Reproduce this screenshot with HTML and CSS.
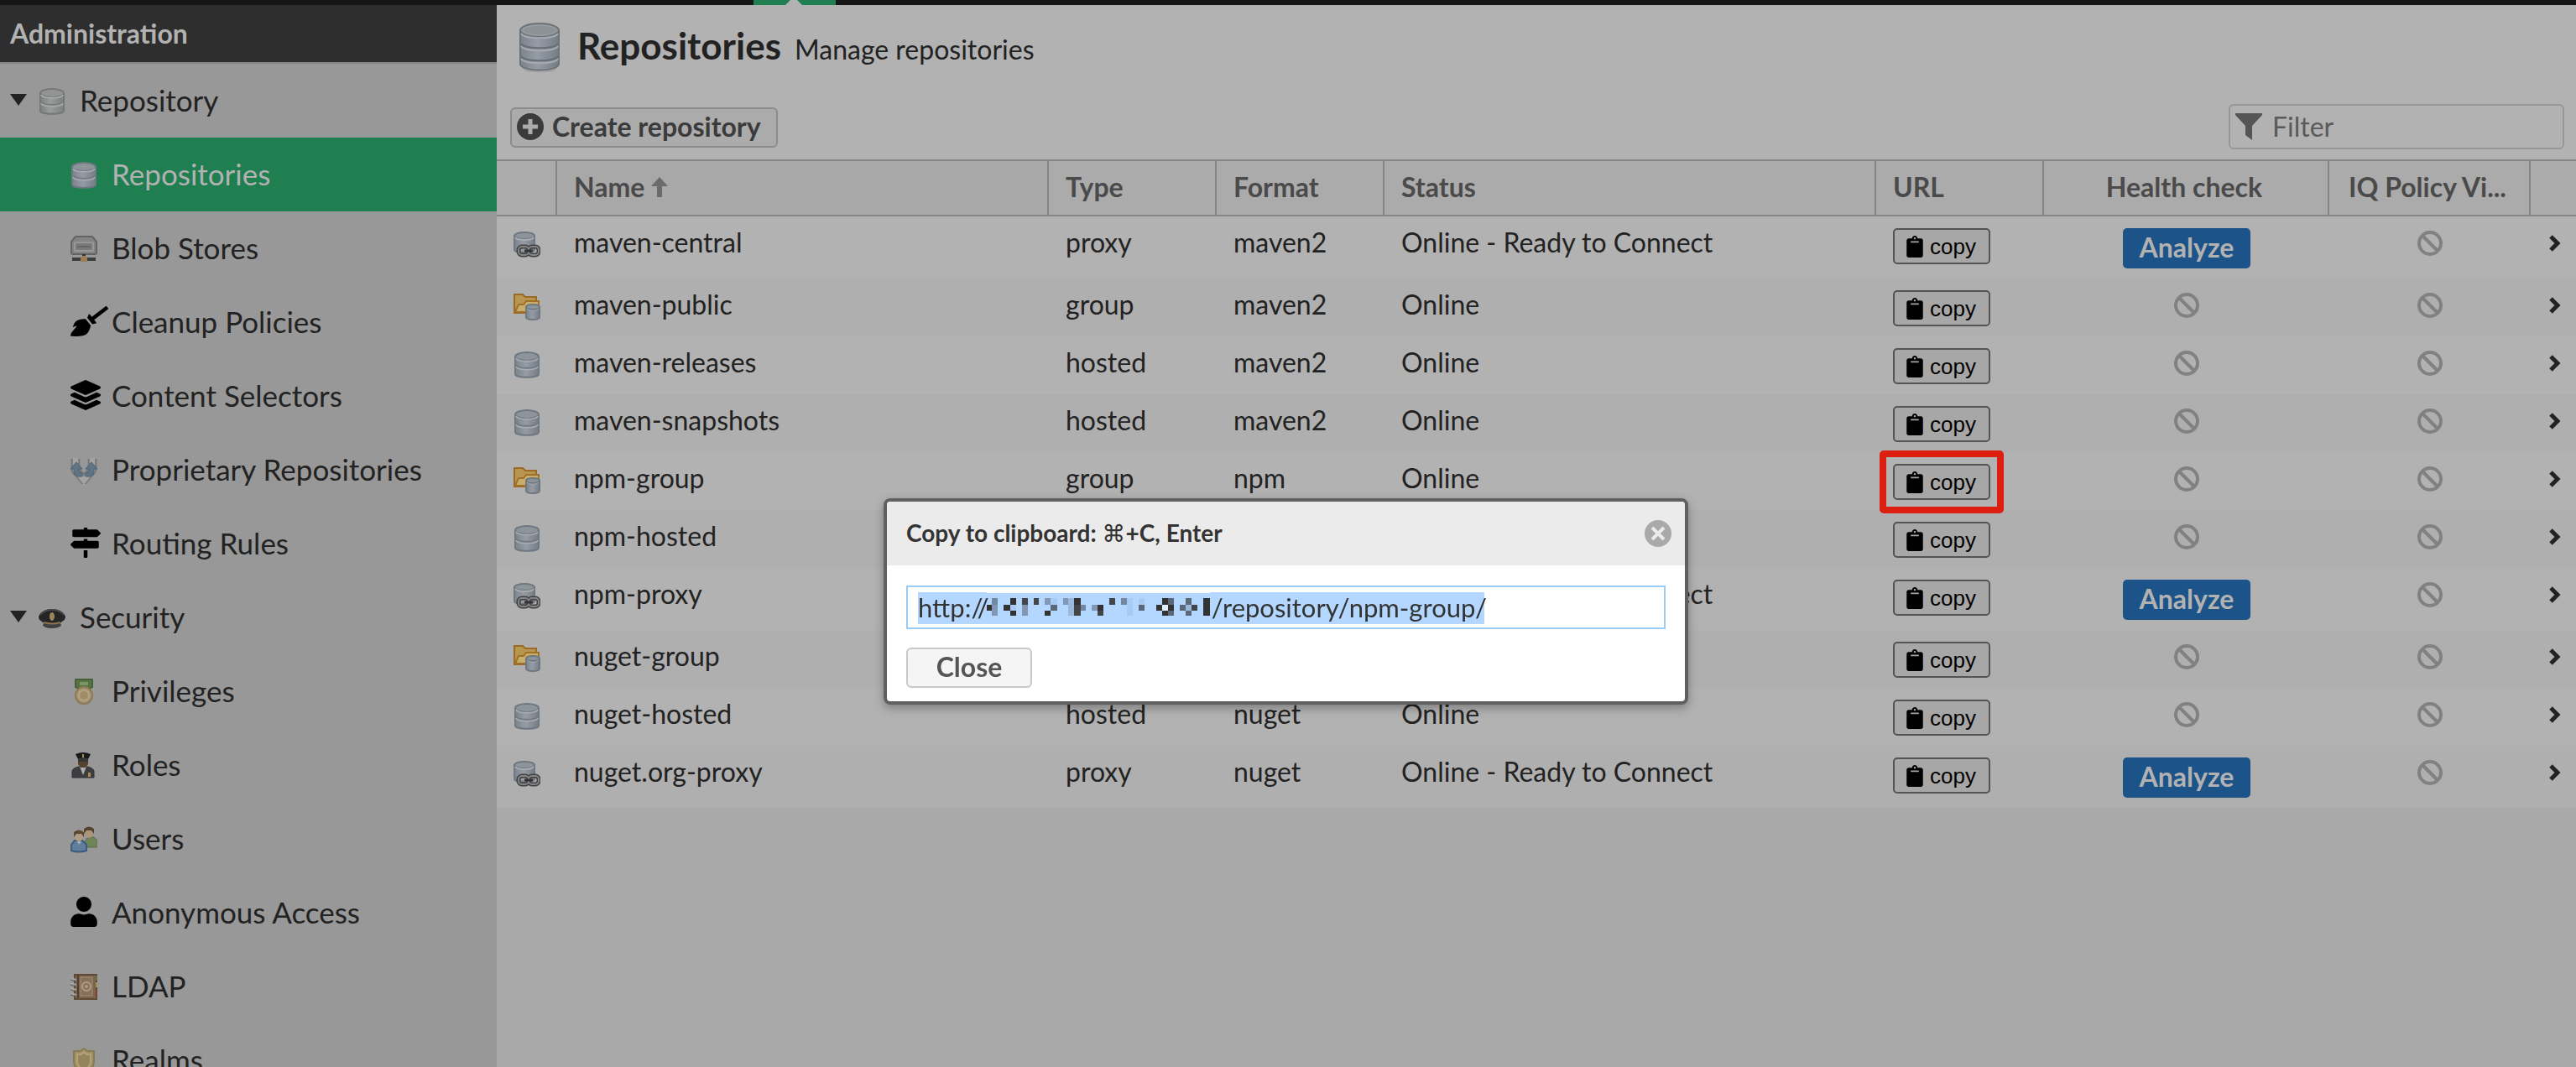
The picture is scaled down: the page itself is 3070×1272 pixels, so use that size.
FILE: index.html
```
<!DOCTYPE html>
<html lang="en">
<head>
<meta charset="utf-8">
<title>Repositories</title>
<link rel="stylesheet" href="styles.css">
</head>
<body>
<svg class="sprite" aria-hidden="true">
  <defs>
    <linearGradient id="steel"><stop offset="0" stop-color="#7d838b"/><stop offset=".45" stop-color="#969ca6"/><stop offset="1" stop-color="#777d85"/></linearGradient>
    <linearGradient id="steel-grey"><stop offset="0" stop-color="#7c7f80"/><stop offset=".4" stop-color="#9a9d9e"/><stop offset="1" stop-color="#7e8182"/></linearGradient>
  </defs>
  <symbol id="db" viewBox="0 0 32 32">
    <path d="M2 7v20c0 5 28 5 28 0V7z" fill="url(#steel)" stroke="#6f7881" stroke-width="2"/>
    <ellipse cx="16" cy="6" rx="14" ry="5" fill="#8d949a" stroke="#6f7881" stroke-width="2"/>
    <path d="M3 8c2 5 24 5 26 0M3 18c2 5 24 5 26 0" fill="none" stroke="#a6abb1" stroke-width="2"/>
    <path d="M3 16c2 5 24 5 26 0" fill="none" stroke="#727a83" stroke-width="2"/>
  </symbol>
  <symbol id="db-faded" viewBox="0 0 32 32">
    <path d="M2 7v20c0 5 28 5 28 0V7z" fill="url(#steel-grey)" stroke="#767878" stroke-width="2"/>
    <ellipse cx="16" cy="6" rx="14" ry="5" fill="#939595" stroke="#767878" stroke-width="2"/>
    <path d="M3 8c2 5 24 5 26 0M3 18c2 5 24 5 26 0" fill="none" stroke="#aaacac" stroke-width="2"/>
    <path d="M3 16c2 5 24 5 26 0" fill="none" stroke="#7a7c7c" stroke-width="2"/>
  </symbol>
  <symbol id="db-tall" viewBox="0 0 50 60">
    <rect x="2" y="6" width="46" height="53" rx="12" fill="#8f9296" opacity=".5"/>
    <path d="M2 9v40c0 10 46 10 46 0V9z" fill="url(#steel)" stroke="#6b7379" stroke-width="2"/>
    <ellipse cx="25" cy="9" rx="23" ry="8" fill="#8c9296" stroke="#6b7379" stroke-width="2"/>
    <ellipse cx="25" cy="9" rx="20" ry="6" fill="none" stroke="#9ca2a6" stroke-width="1"/>
    <path d="M3 13c4 7 40 7 44 0M3 28c4 7 40 7 44 0M3 43c4 7 40 7 44 0" fill="none" stroke="#a5aab0" stroke-width="2"/>
    <path d="M3 25c4 7 40 7 44 0M3 40c4 7 40 7 44 0" fill="none" stroke="#676f76" stroke-width="2"/>
  </symbol>
  <symbol id="proxy" viewBox="0 0 32 32">
    <path d="M1 5v17c0 4 24 4 24 0V5z" fill="url(#steel)" stroke="#6f7881" stroke-width="2"/>
    <ellipse cx="13" cy="5" rx="12" ry="4" fill="#8d949a" stroke="#6f7881" stroke-width="2"/>
    <path d="M2 7c2 4 20 4 22 0" fill="none" stroke="#a6abb1" stroke-width="2"/>
    <g fill="none"><rect x="6" y="18" width="12" height="10" rx="4" stroke="#404040" stroke-width="5"/><rect x="18" y="18" width="12" height="10" rx="4" stroke="#404040" stroke-width="5"/><rect x="6" y="18" width="12" height="10" rx="4" stroke="#858585" stroke-width="2"/><rect x="18" y="18" width="12" height="10" rx="4" stroke="#858585" stroke-width="2"/><path d="M13 23h10" stroke="#333" stroke-width="3"/></g>
  </symbol>
  <symbol id="group" viewBox="0 0 32 32">
    <path d="M1 1h10l3 3h13v5h3v14H1z" fill="#b7964f" stroke="#9a6a26" stroke-width="2"/>
    <path d="M2 22l4-9h6l3-4h15v13z" fill="#c8ae6a" stroke="#a06f28" stroke-width="2"/>
    <path d="M15 16v12c0 4 16 4 16 0V16z" fill="url(#steel)" stroke="#6f7881" stroke-width="2"/>
    <ellipse cx="23" cy="16" rx="8" ry="3" fill="#8d949a" stroke="#6f7881" stroke-width="2"/>
    <path d="M16 18c2 3 12 3 14 0" fill="none" stroke="#a6abb1" stroke-width="1"/>
  </symbol>
  <symbol id="drive" viewBox="0 0 32 32">
    <path d="M6 1h20l5 6v13a2 2 0 0 1-2 2H3a2 2 0 0 1-2-2V7z" fill="#838383" stroke="#646464" stroke-width="2"/>
    <rect x="5" y="8" width="22" height="10" rx="1" fill="#7a7a7a" stroke="#979797" stroke-width="2"/>
    <path d="M8 13h16" stroke="#666" stroke-width="2"/>
    <path d="M2 28h28" stroke="#3d3d3d" stroke-width="4"/>
    <path d="M14 22h4v3h2v6h-8v-6h2z" fill="#9a7f56"/><path d="M14 23h4" stroke="#333" stroke-width="2"/>
  </symbol>
  <symbol id="broom" viewBox="0 0 640 512"><path d="M256.470 216.770l86.730 109.180s-16.600 102.360-76.570 150.120C206.660 523.850 0 510.190 0 510.190s3.800-23.140 11-55.430l94.620-112.170c3.970-4.700-.87-11.620-6.650-9.500l-60.400 22.090c14.440-41.660 32.720-80.040 54.600-97.470 59.970-47.760 163.300-40.940 163.300-40.940zM636.530 31.030l-19.860-25c-5.490-6.900-15.520-8.050-22.410-2.560l-232.480 177.800-34.140-42.970c-5.090-6.410-15.140-5.210-18.590 2.210l-25.330 54.550 86.730 109.180 58.800-12.450c8-1.690 11.420-11.200 6.340-17.600l-34.090-42.920 232.480-177.800c6.890-5.480 8.040-15.530 2.550-22.440z"/></symbol>
  <symbol id="layers" viewBox="0 0 512 512"><path d="M12.410 148.020l232.940 105.670c6.800 3.090 14.490 3.090 21.290 0l232.940-105.670c16.550-7.510 16.550-32.520 0-40.030L266.650 2.310a25.607 25.607 0 0 0-21.290 0L12.410 107.980c-16.550 7.510-16.550 32.530 0 40.040zm487.180 88.280l-58.090-26.330-161.640 73.270c-7.560 3.430-15.590 5.170-23.860 5.170s-16.290-1.740-23.860-5.170L70.510 209.970l-58.100 26.330c-16.550 7.500-16.550 32.500 0 40l232.940 105.590c6.800 3.080 14.490 3.080 21.290 0L499.590 276.300c16.550-7.500 16.550-32.500 0-40zm0 127.800l-57.870-26.230-161.860 73.370c-7.560 3.430-15.590 5.170-23.860 5.170s-16.290-1.740-23.860-5.170L70.290 337.870 12.410 364.100c-16.550 7.500-16.550 32.500 0 40l232.940 105.590c6.800 3.080 14.490 3.080 21.290 0L499.590 404.100c16.550-7.500 16.550-32.500 0-40z"/></symbol>
  <symbol id="signs" viewBox="0 0 512 512"><path d="M507.310 84.690L464 41.370c-6-6-14.140-9.370-22.630-9.370H288V16c0-8.840-7.160-16-16-16h-32c-8.840 0-16 7.160-16 16v16H56c-13.250 0-24 10.750-24 24v80c0 13.250 10.750 24 24 24h385.370c8.490 0 16.620-3.370 22.630-9.370l43.310-43.310c6.250-6.260 6.250-16.380 0-22.630zM224 496c0 8.840 7.160 16 16 16h32c8.840 0 16-7.160 16-16V384h-64v112zm232-272H288v-32h-64v32H70.630c-8.490 0-16.620 3.370-22.630 9.370L4.690 276.690c-6.250 6.250-6.250 16.380 0 22.630L48 342.630c6 6 14.140 9.370 22.630 9.370H456c13.250 0 24-10.750 24-24v-80c0-13.250-10.750-24-24-24z"/></symbol>
  <symbol id="user" viewBox="0 0 448 512"><path d="M224 256c70.700 0 128-57.300 128-128S294.700 0 224 0 96 57.300 96 128s57.300 128 128 128zm89.600 32h-16.700c-22.200 10.200-46.900 16-72.900 16s-50.600-5.800-72.900-16h-16.700C60.200 288 0 348.200 0 422.400V464c0 26.500 21.500 48 48 48h352c26.500 0 48-21.500 48-48v-41.600c0-74.200-60.200-134.400-134.400-134.400z"/></symbol>
  <symbol id="branches" viewBox="0 0 32 32">
    <path d="M6 2v13l10 12 10-12V2" fill="none" stroke="#7c7c7c" stroke-width="11"/>
    <path d="M6 1v15l10 12 10-12V1" fill="none" stroke="#a3a3a3" stroke-width="6"/>
    <path d="M7 6l7 8h-4v3l4 2v4H8l-4-3v-6H0zM25 6l-7 8h4v3l-4 2v4h6l4-3v-6h4z" fill="#5f7485" stroke="#4e6373" stroke-width="1"/>
  </symbol>
  <symbol id="cap" viewBox="0 0 32 32">
    <ellipse cx="16" cy="24" rx="11" ry="4" fill="#2a2a2a" opacity=".8"/>
    <path d="M0 14c2-6 10-9 16-9s14 3 16 9c0 4-3 5-4 6-3 4-21 4-24 0-1-1-4-2-4-6z" fill="#252525"/>
    <path d="M2 12c3-4 8-6 14-6s11 2 14 6" fill="none" stroke="#484848" stroke-width="2"/>
    <path d="M6 21q10 3 20 0" fill="none" stroke="#8a7350" stroke-width="2"/>
    <ellipse cx="16" cy="14" rx="3" ry="5" fill="#9b865d"/>
  </symbol>
  <symbol id="medal" viewBox="0 0 32 32">
    <path d="M6 1h20v9l-5 3H11l-5-3z" fill="#557442" stroke="#46613a" stroke-width="2"/><path d="M11 4h10v4H11z" fill="#7f9468"/>
    <circle cx="16" cy="20" r="10" fill="#a79670" stroke="#8c7853" stroke-width="2"/><circle cx="16" cy="20" r="6" fill="#9f8d66" stroke="#b1a283" stroke-width="2"/>
  </symbol>
  <symbol id="officer" viewBox="0 0 32 32">
    <path d="M2 30v-7c0-3 3-5 8-6h10c5 1 8 3 8 6v7z" fill="#3b3d40" stroke="#303234" stroke-width="1"/>
    <path d="M11 17l4 10 4-10z" fill="#adadad"/>
    <path d="M9 8h12v6l-3 4h-6l-3-4z" fill="#57422f"/>
    <path d="M6 2q9-4 18 0l-3 6q-6-3-12 0z" fill="#17191b"/><path d="M9 8q6-3 12 0v3H9z" fill="#343638"/>
    <path d="M14 2h2v4h-2zM21 24h3v5h-3z" fill="#a88f50"/>
  </symbol>
  <symbol id="people" viewBox="0 0 32 32">
    <path d="M17 25v-7l4-5h7l4 4v8z" fill="#6f8358" stroke="#566c43" stroke-width="1"/>
    <circle cx="22" cy="9" r="5" fill="#aa967d"/><path d="M16 9V3q6-5 12 0v6l-3-4h-6z" fill="#54412e"/>
    <path d="M1 29v-7l4-5h9l5 5v7q-9 3-18 0z" fill="#627e9d" stroke="#3c5b7e" stroke-width="2"/>
    <circle cx="10" cy="13" r="5" fill="#b09c83"/><path d="M4 13V7q6-5 12 0v6l-3-4H7z" fill="#5d4834"/>
    <path d="M8 18l2 4 3-4z" fill="#b2b2b2"/>
  </symbol>
  <symbol id="book" viewBox="0 0 32 32">
    <path d="M5 1h26v29H5z" fill="#7b634c" stroke="#604a36" stroke-width="2"/><path d="M9 1v28" stroke="#513e2e" stroke-width="2"/>
    <rect x="12" y="4" width="14" height="22" fill="#877057" stroke="#a18d77" stroke-width="1"/>
    <circle cx="19" cy="15" r="5" fill="none" stroke="#ad9d8b" stroke-width="2"/><circle cx="19" cy="15" r="2" fill="#ad9d8b"/>
    <path d="M0 5l7 2M0 11l7 2M0 17l7 2M0 23l7 2" stroke="#a3a3a3" stroke-width="2"/><path d="M0 7l6 2M0 13l6 2M0 19l6 2M0 25l6 2" stroke="#5c5c5c" stroke-width="1"/>
    <path d="M31 2v6" stroke="#587244" stroke-width="2"/><path d="M31 10v6" stroke="#a58f50" stroke-width="2"/><path d="M31 20v6" stroke="#833d2c" stroke-width="2"/>
  </symbol>
  <symbol id="shield" viewBox="0 0 32 32">
    <path d="M16 1l4 3h8v12c0 8-5 12-12 15C9 28 4 24 4 16V4h8z" fill="#a29168" stroke="#8b7951" stroke-width="2"/>
    <path d="M16 5l3 3h5v8c0 6-3 8-8 10-5-2-8-4-8-10V8h5z" fill="#95845a" stroke="#b1a27c" stroke-width="2"/>
  </symbol>
  <symbol id="clip" viewBox="0 0 384 512"><path fill-rule="evenodd" d="M384 112v352c0 26.500-21.500 48-48 48H48c-26.500 0-48-21.500-48-48V112c0-26.500 21.500-48 48-48h80c0-35.300 28.700-64 64-64s64 28.700 64 64h80c26.500 0 48 21.500 48 48zM192 40c-13.300 0-24 10.700-24 24s10.700 24 24 24 24-10.700 24-24-10.700-24-24-24zM288 154v-20a6 6 0 0 0-6-6H102a6 6 0 0 0-6 6v20a6 6 0 0 0 6 6h180a6 6 0 0 0 6-6z"/></symbol>
  <symbol id="ban" viewBox="0 0 32 32"><g fill="none" stroke="#818181" stroke-width="4"><circle cx="16" cy="16" r="13"/><path d="M7 7l18 18"/></g></symbol>
  <symbol id="chev" viewBox="0 0 14 20"><path d="M2 2l8 8-8 8" fill="none" stroke="#222" stroke-width="5"/></symbol>
</svg>

<div class="topbar"><span class="topbar-tab"></span></div>
<div class="app">
  <aside class="sidebar">
    <h2 class="sidebar-title">Administration</h2>
    <nav>
      <a class="node" href="#"><span class="caret"></span><span class="icon"><svg class="silk"><use href="#db-faded"/></svg></span>Repository</a>
      <a class="node leaf active" href="#"><span class="icon"><svg class="silk"><use href="#db"/></svg></span>Repositories</a>
      <a class="node leaf" href="#"><span class="icon"><svg class="silk"><use href="#drive"/></svg></span>Blob Stores</a>
      <a class="node leaf" href="#"><span class="icon"><svg class="glyph wide"><use href="#broom"/></svg></span>Cleanup Policies</a>
      <a class="node leaf" href="#"><span class="icon"><svg class="glyph"><use href="#layers"/></svg></span>Content Selectors</a>
      <a class="node leaf" href="#"><span class="icon"><svg class="silk"><use href="#branches"/></svg></span>Proprietary Repositories</a>
      <a class="node leaf" href="#"><span class="icon"><svg class="glyph"><use href="#signs"/></svg></span>Routing Rules</a>
      <a class="node" href="#"><span class="caret"></span><span class="icon"><svg class="silk"><use href="#cap"/></svg></span>Security</a>
      <a class="node leaf" href="#"><span class="icon"><svg class="silk"><use href="#medal"/></svg></span>Privileges</a>
      <a class="node leaf" href="#"><span class="icon"><svg class="silk"><use href="#officer"/></svg></span>Roles</a>
      <a class="node leaf" href="#"><span class="icon"><svg class="silk"><use href="#people"/></svg></span>Users</a>
      <a class="node leaf" href="#"><span class="icon"><svg class="glyph narrow"><use href="#user"/></svg></span>Anonymous Access</a>
      <a class="node leaf" href="#"><span class="icon"><svg class="silk"><use href="#book"/></svg></span>LDAP</a>
      <a class="node leaf" href="#"><span class="icon"><svg class="silk"><use href="#shield"/></svg></span>Realms</a>
    </nav>
  </aside>
  <main class="content">
    <header class="page-head">
      <svg class="page-icon"><use href="#db-tall"/></svg>
      <h1>Repositories</h1>
      <span class="subtitle">Manage repositories</span>
    </header>
    <div class="toolbar">
      <button class="create" type="button"><svg viewBox="0 0 32 32"><circle cx="16" cy="16" r="16" fill="#3b3b3b"/><path d="M16 7v18M7 16h18" stroke="#ababab" stroke-width="5"/></svg>Create repository</button>
      <label class="filter"><svg viewBox="0 0 32 32"><path d="M0 0h32v2L20 15v17l-8-6V15L0 2z" fill="#555"/></svg><input type="text" placeholder="Filter" aria-label="Filter"></label>
    </div>
    <table class="grid">
      <colgroup><col class="c-icon"><col><col class="c-short"><col class="c-short"><col><col class="c-short"><col class="c-health"><col class="c-iq"><col class="c-go"></colgroup>
      <thead><tr><th></th><th class="sorted">Name <svg class="sort" viewBox="0 0 20 24"><path d="M10 0l10 11h-7v13H7V11H0z" fill="#6b6b6b"/></svg></th><th>Type</th><th>Format</th><th>Status</th><th>URL</th><th class="mid">Health check</th><th class="mid">IQ Policy Vi...</th><th></th></tr></thead>
      <tbody>
        <tr><td class="pic"><svg><use href="#proxy"/></svg></td><td>maven-central</td><td>proxy</td><td>maven2</td><td>Online - Ready to Connect</td><td class="act"><button class="copy" type="button"><svg><use href="#clip"/></svg>copy</button></td><td class="act"><button class="analyze" type="button">Analyze</button></td><td class="ban"><svg><use href="#ban"/></svg></td><td class="go"><svg><use href="#chev"/></svg></td></tr>
        <tr><td class="pic"><svg><use href="#group"/></svg></td><td>maven-public</td><td>group</td><td>maven2</td><td>Online</td><td class="act"><button class="copy" type="button"><svg><use href="#clip"/></svg>copy</button></td><td class="ban"><svg><use href="#ban"/></svg></td><td class="ban"><svg><use href="#ban"/></svg></td><td class="go"><svg><use href="#chev"/></svg></td></tr>
        <tr><td class="pic"><svg><use href="#db"/></svg></td><td>maven-releases</td><td>hosted</td><td>maven2</td><td>Online</td><td class="act"><button class="copy" type="button"><svg><use href="#clip"/></svg>copy</button></td><td class="ban"><svg><use href="#ban"/></svg></td><td class="ban"><svg><use href="#ban"/></svg></td><td class="go"><svg><use href="#chev"/></svg></td></tr>
        <tr><td class="pic"><svg><use href="#db"/></svg></td><td>maven-snapshots</td><td>hosted</td><td>maven2</td><td>Online</td><td class="act"><button class="copy" type="button"><svg><use href="#clip"/></svg>copy</button></td><td class="ban"><svg><use href="#ban"/></svg></td><td class="ban"><svg><use href="#ban"/></svg></td><td class="go"><svg><use href="#chev"/></svg></td></tr>
        <tr><td class="pic"><svg><use href="#group"/></svg></td><td>npm-group</td><td>group</td><td>npm</td><td>Online</td><td class="act"><button class="copy marked" type="button"><svg><use href="#clip"/></svg>copy</button></td><td class="ban"><svg><use href="#ban"/></svg></td><td class="ban"><svg><use href="#ban"/></svg></td><td class="go"><svg><use href="#chev"/></svg></td></tr>
        <tr><td class="pic"><svg><use href="#db"/></svg></td><td>npm-hosted</td><td>hosted</td><td>npm</td><td>Online</td><td class="act"><button class="copy" type="button"><svg><use href="#clip"/></svg>copy</button></td><td class="ban"><svg><use href="#ban"/></svg></td><td class="ban"><svg><use href="#ban"/></svg></td><td class="go"><svg><use href="#chev"/></svg></td></tr>
        <tr><td class="pic"><svg><use href="#proxy"/></svg></td><td>npm-proxy</td><td>proxy</td><td>npm</td><td>Online - Ready to Connect</td><td class="act"><button class="copy" type="button"><svg><use href="#clip"/></svg>copy</button></td><td class="act"><button class="analyze" type="button">Analyze</button></td><td class="ban"><svg><use href="#ban"/></svg></td><td class="go"><svg><use href="#chev"/></svg></td></tr>
        <tr><td class="pic"><svg><use href="#group"/></svg></td><td>nuget-group</td><td>group</td><td>nuget</td><td>Online</td><td class="act"><button class="copy" type="button"><svg><use href="#clip"/></svg>copy</button></td><td class="ban"><svg><use href="#ban"/></svg></td><td class="ban"><svg><use href="#ban"/></svg></td><td class="go"><svg><use href="#chev"/></svg></td></tr>
        <tr><td class="pic"><svg><use href="#db"/></svg></td><td>nuget-hosted</td><td>hosted</td><td>nuget</td><td>Online</td><td class="act"><button class="copy" type="button"><svg><use href="#clip"/></svg>copy</button></td><td class="ban"><svg><use href="#ban"/></svg></td><td class="ban"><svg><use href="#ban"/></svg></td><td class="go"><svg><use href="#chev"/></svg></td></tr>
        <tr><td class="pic"><svg><use href="#proxy"/></svg></td><td>nuget.org-proxy</td><td>proxy</td><td>nuget</td><td>Online - Ready to Connect</td><td class="act"><button class="copy" type="button"><svg><use href="#clip"/></svg>copy</button></td><td class="act"><button class="analyze" type="button">Analyze</button></td><td class="ban"><svg><use href="#ban"/></svg></td><td class="go"><svg><use href="#chev"/></svg></td></tr>
      </tbody>
    </table>
  </main>
</div>

<div class="overlay">
  <section class="dialog" role="dialog" aria-labelledby="dlg-title">
    <header class="dialog-head">
      <h2 id="dlg-title">Copy to clipboard: <span class="key">⌘</span>+C, Enter</h2>
      <button class="x" type="button" aria-label="Close dialog"><svg viewBox="0 0 32 32"><circle cx="16" cy="16" r="16" fill="#a9a9a9"/><path d="M9 9l14 14M23 9L9 23" stroke="#ebebeb" stroke-width="4"/></svg></button>
    </header>
    <div class="dialog-body">
      <div class="url">
        <input type="text" aria-label="Repository URL" value="http://&emsp;&emsp;&emsp;&emsp;&emsp;&emsp;&emsp;&emsp;&nbsp;&nbsp;&nbsp;&nbsp;&nbsp;&nbsp;&nbsp;&nbsp;&nbsp;&nbsp;/repository/npm-group/">
        <svg class="redacted" viewBox="48 47 798 87" shape-rendering="crispEdges" aria-hidden="true">
          <path d="M48 47h798v3H48z" fill="#fff"/>
          <path fill="#333" d="M48 91h18v21H48zM132 69h21v22h-21zM108 91h24v21h-24zM132 112h21v20h-21zM360 69h24v22h-24zM255 112h21v20h-21zM444 91h21v21h-21zM675 69h21v22h-21zM654 91h21v21h-21zM696 91h21v21h-21zM675 112h21v20h-21zM822 69h24v63h-24z"/>
          <path fill="#424649" d="M216 69h18v22h-18zM360 91h24v41h-24zM444 112h21v20h-21zM486 69h21v22h-21zM174 69h21v22h-21zM780 91h21v21h-21z"/>
          <path fill="#5b6878" d="M276 91h24v21h-24zM591 91h21v21h-21zM696 69h21v22h-21zM696 112h21v20h-21zM759 69h21v22h-21zM759 112h21v20h-21zM738 91h21v21h-21z"/>
          <path fill="#7287a1" d="M66 69h22v22H66zM528 69h21v22h-21zM384 91h18v21h-18z"/>
          <path fill="#8197b3" d="M66 91h22v41H66zM174 91h21v41h-21zM255 69h21v22h-21zM321 69h18v22h-18zM423 91h21v21h-21z"/>
          <path fill="#9bb9dc" d="M339 69h21v63h-21zM759 91h21v21h-21z"/>
          <path fill="#a7cbf5" d="M276 69h24v22h-24zM132 91h21v21h-21zM549 69h21v63h-21zM591 69h21v22h-21z"/>
          <path fill="#e2f0ff" d="M675 91h21v21h-21z"/>
        </svg>
      </div>
      <button class="close" type="button">Close</button>
    </div>
  </section>
</div>
</body>
</html>
```
FILE: styles.css
```
* { box-sizing: border-box; }
body {
  margin: 0;
  height: 100vh;
  overflow: hidden;
  display: flex;
  flex-direction: column;
  font: 32px/38px Lato, "Liberation Sans", sans-serif;
  color: #222;
  background: #a9a9a9;
}
h1, h2 { margin: 0; }
svg { display: block; flex: none; }
button, input { font: inherit; color: inherit; margin: 0; }
.sprite { position: absolute; width: 0; height: 0; }

.topbar { flex: none; height: 6px; padding-left: 898px; background: #161616; }
.topbar-tab {
  display: block;
  width: 98px;
  height: 6px;
  background: #1f7f50;
}
.topbar-tab::after {
  content: "";
  display: block;
  width: 20px;
  height: 6px;
  margin-left: 38px;
  float: left;
  background: #b2b2b2;
  clip-path: polygon(6px 0, 14px 0, 100% 100%, 0 100%);
}
.app { flex: 1; min-height: 0; display: flex; }

.sidebar { flex: none; width: 592px; overflow: hidden; background: #989898; }
.sidebar-title {
  height: 70px;
  padding: 15px 12px;
  border-bottom: 2px solid #838383;
  background: #2e2e2e;
  color: #b2b2b2;
  font-size: 32px;
}
.node {
  display: flex;
  align-items: center;
  height: 88px;
  padding: 0 0 2px 12px;
  font-size: 35px;
  color: #222;
  text-decoration: none;
}
.leaf { padding-left: 84px; }
.active { background: #1f7f50; color: #b2b2b2; }
.caret {
  width: 20px;
  height: 14px;
  margin-right: 14px;
  background: #222;
  clip-path: polygon(0 0, 100% 0, 50% 100%);
}
.icon { width: 49px; flex: none; }
.silk { width: 32px; height: 32px; margin-top: 4px; }
.glyph { width: 36px; height: 36px; }
.wide { width: 45px; }
.narrow { width: 32px; }

.content { flex: 1; min-width: 0; }
.page-head {
  display: flex;
  align-items: baseline;
  height: 122px;
  padding: 21px 26px 0;
  background: #b2b2b2;
}
.page-icon { width: 50px; height: 60px; align-self: flex-start; margin-right: 20px; }
h1 { font-size: 44px; line-height: 54px; margin-right: 16px; }
.toolbar {
  display: flex;
  justify-content: space-between;
  align-items: flex-start;
  height: 62px;
  padding: 0 14px 0 16px;
  background: #b2b2b2;
}
.create {
  display: flex;
  align-items: center;
  gap: 10px;
  height: 48px;
  padding: 0 18px 2px 6px;
  border: 2px solid #8b8b8b;
  border-radius: 6px;
  background: #ababab;
  color: #3b3b3b;
  font-weight: 700;
}
.create svg { width: 32px; height: 32px; }
.filter {
  display: flex;
  align-items: center;
  gap: 12px;
  width: 400px;
  height: 54px;
  margin-top: -4px;
  padding: 0 6px;
  border: 2px solid #979797;
  border-radius: 6px;
}
.filter svg { width: 32px; height: 32px; }
.filter input { flex: 1; min-width: 0; padding: 0; border: 0; background: none; }
.filter input::placeholder { color: #5a5a5a; opacity: 1; }

.grid { width: 100%; table-layout: fixed; border-collapse: separate; border-spacing: 0; }
.c-icon { width: 72px; }
.c-short { width: 200px; }
.c-health { width: 340px; }
.c-iq { width: 240px; }
.c-go { width: 54px; }
th {
  height: 68px;
  padding: 0 0 2px 20px;
  border: solid #868686;
  border-width: 2px 2px 2px 0;
  background: #ababab;
  color: #4a4a4a;
  text-align: left;
  white-space: nowrap;
}
th:last-child { border-right: 0; }
.mid { padding: 0 4px 2px 0; text-align: center; }
.sorted { background: #a8a8a8; }
.sort { display: inline-block; width: 20px; height: 24px; }
td { padding: 12px 0 0 20px; vertical-align: top; white-space: nowrap; background: #b2b2b2; }
tr:nth-child(even) td { background: #afafaf; }
.pic { padding-top: 18px; }
.pic svg { width: 32px; height: 32px; }
.act { padding: 14px 0 12px 20px; }
.ban { padding: 16px 0 0; }
.ban svg { width: 32px; height: 32px; margin: 0 auto; }
.go { padding: 22px 0 0 22px; }
.go svg { width: 14px; height: 20px; }
.copy {
  position: relative;
  display: flex;
  align-items: center;
  gap: 8px;
  width: 116px;
  height: 43px;
  padding: 0 14px;
  border: 2px solid #545454;
  border-radius: 5px;
  background: #a7a7a7;
  color: #000;
  font: 26px/30px "Liberation Sans", Arial, sans-serif;
}
.copy svg { width: 20px; height: 26px; }
.marked::after {
  content: "";
  position: absolute;
  inset: -18px;
  border: 8px solid #dc1f0e;
  border-radius: 5px;
}
.analyze {
  display: block;
  width: 152px;
  height: 48px;
  margin: 0 auto;
  padding: 0 0 2px;
  border: 0;
  border-radius: 5px;
  background: #1c5389;
  color: #b2b2b2;
  font-weight: 700;
}
td.act:nth-child(7) { padding-left: 0; }

.overlay {
  position: fixed;
  inset: 0;
  display: flex;
  justify-content: center;
  align-items: flex-start;
  padding: 594px 5px 0 0;
}
.dialog {
  width: 959px;
  border: 4px solid #606060;
  border-radius: 8px;
  background: #fff;
  color: #333;
  box-shadow: 0 4px 12px rgba(0, 0, 0, .3);
  overflow: hidden;
}
.dialog-head {
  display: flex;
  align-items: center;
  justify-content: space-between;
  height: 76px;
  padding: 0 16px 0 23px;
  background: #ebebeb;
}
.dialog-head h2 { font-size: 28px; }
.key { font-weight: 400; font-family: "DejaVu Sans", sans-serif; }
.x { width: 32px; height: 32px; padding: 0; border: 0; background: none; }
.dialog-body { padding: 24px 23px 16px; }
.url { position: relative; margin-bottom: 22px; }
.url input {
  display: block;
  width: 100%;
  height: 52px;
  padding: 0 12px;
  border: 2px solid #9acbf1;
  outline: 0;
  font-size: 31px;
  background: linear-gradient(#b3d7ff, #b3d7ff) 12px 6px / 675px 38px no-repeat;
}
.redacted { position: absolute; left: 96px; top: 8px; width: 266px; height: 29px; }
.close {
  display: block;
  width: 150px;
  height: 48px;
  padding: 0 0 2px;
  border: 2px solid #c8c8c8;
  border-radius: 6px;
  background: #f5f5f5;
  color: #555;
  font-weight: 700;
}
```
